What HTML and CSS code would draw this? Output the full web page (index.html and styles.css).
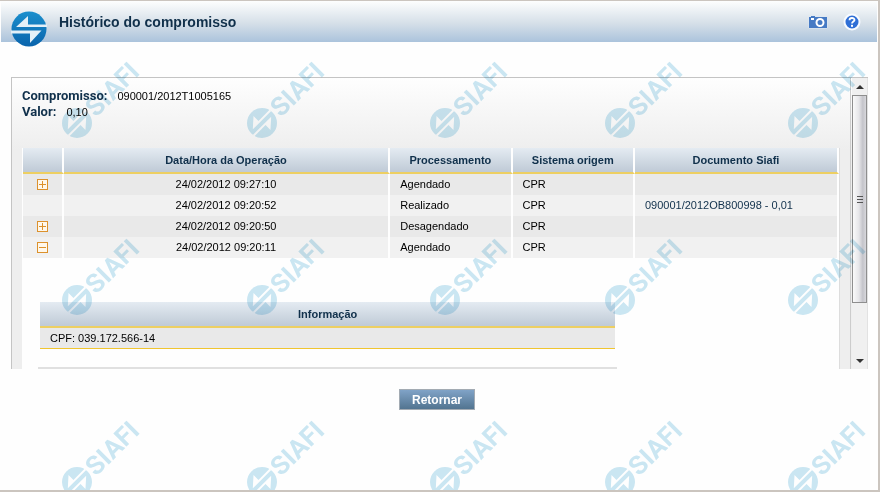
FILE: index.html
```html
<!DOCTYPE html>
<html lang="pt-BR">
<head>
  <meta charset="UTF-8">
  <meta name="viewport" content="width=device-width, initial-scale=1.0">
  <title>Histórico do compromisso</title>
  <link rel="stylesheet" href="styles.css">
</head>
<body>
  <div class="window">
    <header class="titlebar">
      <svg class="logo" viewBox="-18 -18 36 36" aria-hidden="true">
        <defs>
          <linearGradient id="logoFill" x1="0" y1="0" x2="0" y2="1">
            <stop offset="0" stop-color="#1b8fcd"/>
            <stop offset="1" stop-color="#0a64ac"/>
          </linearGradient>
        </defs>
        <circle r="17.5" fill="url(#logoFill)"/>
        <path d="M-1 -13V-4.500H18V-2H-13Z" fill="#e3f0f8"/>
        <path d="M1 14V4.500H-18V1.500H12.500Z" fill="#e3f0f8"/>
      </svg>
      <h1>Histórico do compromisso</h1>
      <div class="tools">
        <button type="button" class="tool" aria-label="Capturar tela">
          <svg width="20" height="16" viewBox="0 0 20 16">
            <path d="M1 3H3V2H7V3H19V14H1Z" fill="#467ac4" stroke="#dfe9f4" stroke-width="1" paint-order="stroke"/>
            <rect x="3" y="4" width="3" height="2" fill="#fff"/>
            <circle cx="12" cy="8.500" r="3.500" fill="#467ac4" stroke="#fff" stroke-width="2"/>
          </svg>
        </button>
        <button type="button" class="tool" aria-label="Ajuda">
          <svg width="18" height="18" viewBox="0 0 18 18">
            <circle cx="9" cy="9" r="7.500" fill="#2f6fd6" stroke="#f8fbff" stroke-width="2"/>
            <path d="M6.500 7.200C6.500 4.300 11.500 4.300 11.500 7C11.500 8.700 9 8.500 9 10.600" fill="none" stroke="#fff" stroke-width="1.800"/>
            <rect x="8" y="11.800" width="2" height="2" fill="#fff"/>
          </svg>
        </button>
      </div>
    </header>

    <main>
      <div class="panel">
        <div class="content">
          <dl class="summary">
            <div><dt>Compromisso:</dt><dd>090001/2012T1005165</dd></div>
            <div><dt>Valor:</dt><dd>0,10</dd></div>
          </dl>

          <div class="results">
            <table class="grid history">
              <colgroup>
                <col class="c-toggle"><col class="c-date"><col class="c-proc"><col class="c-sys"><col class="c-doc">
              </colgroup>
              <thead>
                <tr>
                  <th></th>
                  <th>Data/Hora da Operação</th>
                  <th>Processamento</th>
                  <th>Sistema origem</th>
                  <th>Documento Siafi</th>
                </tr>
              </thead>
              <tbody>
                <tr>
                  <td><button type="button" class="toggle plus" aria-label="Expandir"></button></td>
                  <td>24/02/2012 09:27:10</td>
                  <td>Agendado</td>
                  <td>CPR</td>
                  <td></td>
                </tr>
                <tr>
                  <td></td>
                  <td>24/02/2012 09:20:52</td>
                  <td>Realizado</td>
                  <td>CPR</td>
                  <td><a href="#">090001/2012OB800998 - 0,01</a></td>
                </tr>
                <tr>
                  <td><button type="button" class="toggle plus" aria-label="Expandir"></button></td>
                  <td>24/02/2012 09:20:50</td>
                  <td>Desagendado</td>
                  <td>CPR</td>
                  <td></td>
                </tr>
                <tr>
                  <td><button type="button" class="toggle" aria-label="Recolher"></button></td>
                  <td>24/02/2012 09:20:11</td>
                  <td>Agendado</td>
                  <td>CPR</td>
                  <td></td>
                </tr>
              </tbody>
            </table>

            <div class="detail">
              <table class="grid info">
                <thead><tr><th>Informação</th></tr></thead>
                <tbody><tr><td>CPF: 039.172.566-14</td></tr></tbody>
              </table>
            </div>
          </div>
        </div>

        <div class="scrollbar">
          <button type="button" class="arrow" aria-label="Rolar para cima">
            <svg width="8" height="4" viewBox="0 0 8 4"><path d="M4 0L8 4H0Z" fill="#333"/></svg>
          </button>
          <div class="track"><div class="thumb"><i></i><i></i><i></i></div></div>
          <button type="button" class="arrow" aria-label="Rolar para baixo">
            <svg width="8" height="4" viewBox="0 0 8 4"><path d="M0 0H8L4 4Z" fill="#333"/></svg>
          </button>
        </div>
      </div>

      <div class="actions">
        <button type="button" class="btn">Retornar</button>
      </div>
    </main>

    <!-- marca d'agua -->
    <svg class="watermark" aria-hidden="true">
      <defs>
        <g id="mark">
          <circle r="15"/>
          <g transform="rotate(-45)">
            <path d="M-1 -11V-4H15V-2H-11Z" fill="#fff"/>
            <path d="M1 11V4H-15V2H11Z" fill="#fff"/>
            <text x="17" y="10">SIAFI</text>
          </g>
        </g>
      </defs>
      <use href="#mark" x="77" y="122"/>
      <use href="#mark" x="262" y="122"/>
      <use href="#mark" x="445" y="122"/>
      <use href="#mark" x="620" y="122"/>
      <use href="#mark" x="803" y="122"/>
      <use href="#mark" x="77" y="299"/>
      <use href="#mark" x="262" y="299"/>
      <use href="#mark" x="445" y="299"/>
      <use href="#mark" x="620" y="299"/>
      <use href="#mark" x="803" y="299"/>
      <use href="#mark" x="77" y="481"/>
      <use href="#mark" x="262" y="481"/>
      <use href="#mark" x="445" y="481"/>
      <use href="#mark" x="620" y="481"/>
      <use href="#mark" x="803" y="481"/>
    </svg>
  </div>
</body>
</html>
```
FILE: styles.css
```css
* {
  box-sizing: border-box;
}
body {
  margin: 0;
  font-family: "Liberation Sans", Arial, sans-serif;
  font-size: 11px;
  color: #000;
  background: #fefefe;
}
button {
  font-family: inherit;
  padding: 0;
  cursor: pointer;
}
.window {
  position: relative;
  min-height: 100vh;
  border: solid #cbc5bf;
  border-width: 1px 2px 2px 0;
  overflow: hidden;
}

/* title bar */
.titlebar {
  display: flex;
  align-items: center;
  height: 41px;
  margin: 0 1px;
  padding: 0 16px 0 10px;
  background: linear-gradient(#fdfefe, #d5dfe8 55%, #abc3dc);
}
.logo {
  width: 36px;
  height: 36px;
  align-self: flex-end;
  margin-bottom: -5px;
}
h1 {
  flex: 1;
  margin: 0 0 0 12px;
  font-size: 14px;
  line-height: 18px;
  color: #10304b;
}
.tools {
  display: flex;
  align-items: center;
  gap: 15px;
}
.tool {
  display: flex;
  border: 0;
  background: none;
}

/* scrolling panel */
main {
  padding: 35px 10px 0 11px;
}
.panel {
  display: flex;
  border: solid #c4c4c4;
  border-width: 1px 0 0 1px;
  background: linear-gradient(#fefefe, #eee 72px);
}
.content {
  flex: 1;
  padding: 10px 10px 0;
  border-right: 1px solid #ccc;
}
.summary {
  margin: 0 0 28px;
}
.summary div {
  display: flex;
  align-items: baseline;
  gap: 10px;
  height: 16px;
  line-height: 16px;
}
.summary dt {
  font-family: Roboto, "Liberation Sans", sans-serif;
  font-size: 13px;
  font-weight: bold;
  color: #10304b;
}
.summary dd {
  margin: 0;
}
.results {
  background: #fefefe;
  border-left: 1px solid #fefefe;
  border-right: 1px solid #ddd;
}

/* tables */
.grid {
  width: 100%;
  table-layout: fixed;
  border-collapse: separate;
  border-spacing: 0;
}
.grid th {
  height: 26px;
  padding: 0;
  background: linear-gradient(#e4ebf2, #bfcad6);
  border-bottom: 2px solid #edcf62;
  color: #10304b;
}
.grid td {
  height: 21px;
  padding: 0 10px;
  line-height: 13px;
  background: #e9e9e9;
}
.grid tr:nth-child(even) td {
  background: #f1f1f1;
}
.history th,
.history td {
  border-right: 2px solid #fefefe;
}
.history td:nth-child(-n+2) {
  text-align: center;
}
.c-toggle { width: 5%; }
.c-date { width: 40%; }
.c-proc { width: 15%; }
.c-sys { width: 15%; }
.c-doc { width: 25%; }
.grid a {
  color: #10304b;
  text-decoration: none;
}
.toggle {
  display: block;
  width: 11px;
  height: 11px;
  margin: 0 auto;
  border: 1px solid #dc912c;
  background: linear-gradient(#dc912c, #dc912c) center / 7px 1px no-repeat #fff8ec;
}
.toggle.plus {
  background:
    linear-gradient(#dc912c, #dc912c) center / 7px 1px no-repeat,
    linear-gradient(#dc912c, #dc912c) center / 1px 7px no-repeat #fff8ec;
}
.detail {
  width: 71%;
  margin: 44px 0 0 15px;
  padding: 0 2px 18px;
  border-bottom: 2px solid #e0e0e0;
}
.info {
  border-bottom: 1px solid #f0c530;
}
.info td {
  height: 20px;
}

/* scrollbar */
.scrollbar {
  display: flex;
  flex-direction: column;
  width: 16px;
  margin-left: 1px;
  background: #f0f0f0;
  border-right: 1px solid #e2e2e2;
}
.arrow {
  display: flex;
  align-items: center;
  justify-content: center;
  height: 17px;
  border: 0;
  background: none;
}
.track {
  flex: 1;
}
.thumb {
  display: flex;
  flex-direction: column;
  align-items: center;
  justify-content: center;
  gap: 2px;
  height: 81%;
  border: 1px solid #8e8e8e;
  background: linear-gradient(90deg, #fafafa, #e6e6e9 45%, #c4c4ca 75%, #d8d8dc);
}
.thumb i {
  width: 6px;
  height: 1px;
  background: #555;
}

.actions {
  display: flex;
  justify-content: center;
  padding: 20px 5px 20px 0;
}
.btn {
  width: 76px;
  height: 21px;
  border: 1px solid #a3abb3;
  background: linear-gradient(#80a3c7, #527490);
  color: #fff;
  font-size: 12px;
  font-weight: bold;
}

/* watermark lies over everything and lets clicks through */
.watermark {
  position: absolute;
  left: 0;
  top: 0;
  width: 100%;
  height: 100%;
  fill: #cbe7f3;
  mix-blend-mode: multiply;
  pointer-events: none;
}
.watermark text {
  font-family: Roboto, "Liberation Sans", sans-serif;
  font-size: 26px;
  font-weight: bold;
}
```
